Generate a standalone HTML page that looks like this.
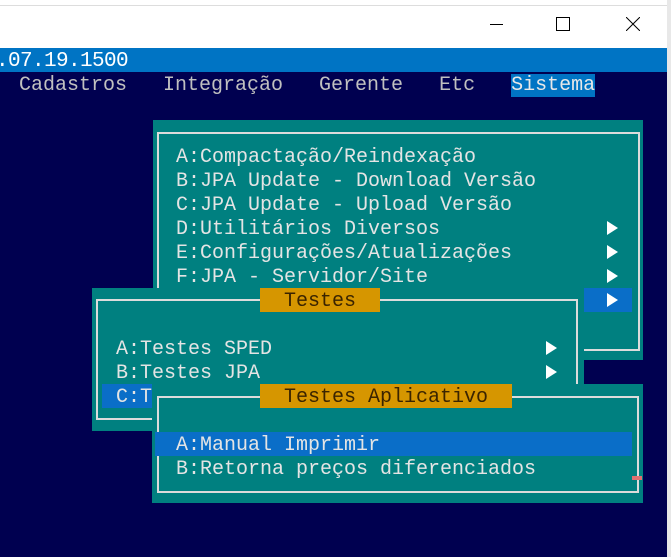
<!DOCTYPE html><html><head><style>
body{margin:0;width:671px;height:557px;overflow:hidden;background:#f0f0f0;position:relative;font-family:"Liberation Mono",monospace;}
.a{position:absolute}
.t{font-size:20px;line-height:24px;color:#e4e4e4;white-space:pre;padding-top:2px;box-sizing:border-box}
.teal{background:#008080}
.bd{border:2px solid #dcdcdc;box-sizing:border-box}
.hl{background:#0a6ec8}
.ttl{background:#d69600;color:#3a2400}
.tri{position:absolute;width:0;height:0;border-left:11px solid #fff;border-top:7px solid transparent;border-bottom:7px solid transparent}
</style></head><body>
<div class="a" style="left:0;top:0;width:667px;height:48px;background:#fff"></div>
<div class="a" style="left:0;top:0;width:667px;height:5px;background:#fff;border-bottom:1px solid #ddd"></div>
<div class="a" style="left:490px;top:24px;width:13px;height:1px;background:#000"></div>
<div class="a" style="left:556px;top:17px;width:12px;height:12px;border:1px solid #000"></div>
<svg class="a" style="left:626px;top:17px" width="14" height="14"><path d="M0 0L14 14M14 0L0 14" stroke="#000" stroke-width="1"/></svg>
<div class="a" style="left:667px;top:0;width:4px;height:557px;background:#e8e8e8"></div>
<div class="a" style="left:0;top:48px;width:667px;height:24px;background:#0074c4"></div>
<div class="a t" style="left:-4px;top:48px;color:#fff;font-size:21px;letter-spacing:-0.6px">.07.19.1500</div>
<div class="a" style="left:0;top:72px;width:667px;height:485px;background:#000050"></div>
<div class="a t" style="left:19px;top:72px;color:#c0c0c0">Cadastros   Integração   Gerente   Etc   <span style="background:#0074c4;color:#e8e8e8">Sistema</span></div>

<div class="a teal" style="left:153px;top:120px;width:490px;height:240px"></div>
<div class="a bd" style="left:157px;top:132px;width:483px;height:219px"></div>
<div class="a t" style="left:176px;top:144px">A:Compactação/Reindexação
B:JPA Update - Download Versão
C:JPA Update - Upload Versão
D:Utilitários Diversos
E:Configurações/Atualizações
F:JPA - Servidor/Site</div>
<div class="a hl" style="left:584px;top:288px;width:48px;height:24px"></div>
<div class="tri" style="left:607px;top:221px"></div>
<div class="tri" style="left:607px;top:245px"></div>
<div class="tri" style="left:607px;top:269px"></div>
<div class="tri" style="left:607px;top:293px"></div>

<div class="a teal" style="left:92px;top:288px;width:492px;height:143px"></div>
<div class="a bd" style="left:96px;top:299px;width:482px;height:121px"></div>
<div class="a ttl t" style="left:260px;top:288px;width:120px;height:24px;text-align:center;color:#3a2400">Testes</div>
<div class="a hl" style="left:102px;top:384px;width:60px;height:24px"></div>
<div class="a t" style="left:116px;top:336px">A:Testes SPED
B:Testes JPA
C:T</div>
<div class="tri" style="left:546px;top:341px"></div>
<div class="tri" style="left:546px;top:365px"></div>

<div class="a teal" style="left:152px;top:384px;width:491px;height:119px"></div>
<div class="a bd" style="left:157px;top:396px;width:482px;height:97px"></div>
<div class="a ttl t" style="left:260px;top:384px;width:252px;height:24px;text-align:center;color:#3a2400">Testes Aplicativo</div>
<div class="a hl" style="left:155px;top:432px;width:477px;height:24px"></div>
<div class="a t" style="left:176px;top:432px">A:Manual Imprimir
B:Retorna preços diferenciados</div>
<div class="a" style="left:632px;top:476px;width:10px;height:4px;background:#e07070"></div>
</body></html>
